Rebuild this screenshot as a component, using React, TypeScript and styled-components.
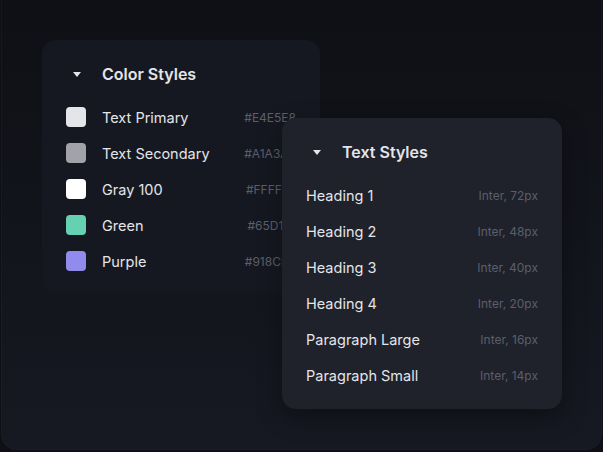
import React from 'react';
import styled, { createGlobalStyle } from 'styled-components';

const GlobalStyle = createGlobalStyle`
  html, body {
    margin: 0;
    padding: 0;
    background: #0f1015;
    font-family: Inter, "Noto Sans", sans-serif;
    -webkit-font-smoothing: antialiased;
  }
`;

const Frame = styled.div`
  box-sizing: border-box;
  width: 601px;
  height: 450px;
  margin: 0 1px;
  border-radius: 0 0 16px 16px;
  background: linear-gradient(to bottom, #0f1015 0%, #12141b 45%, #161922 100%);
  box-shadow: inset 1px 0 0 rgba(40, 44, 58, 0.25), inset -1px 0 0 rgba(40, 44, 58, 0.25),
    inset 0 -1px 0 rgba(40, 44, 58, 0.25);
  overflow: hidden;
  display: grid;
  grid-template-columns: 41px 240px 38px 242px;
  grid-template-rows: 40px 78px auto auto;
`;

const Card = styled.section<{ $tone: 'back' | 'front'; $area: string }>`
  grid-area: ${p => p.$area};
  align-self: start;
  box-sizing: border-box;
  padding: 16px 24px ${p => (p.$tone === 'front' ? '16px' : '14px')};
  border-radius: 14px;
  background: ${p => (p.$tone === 'front' ? '#1f212b' : '#161821')};
  box-shadow: ${p => (p.$tone === 'front' ? '0 8px 24px rgba(0, 0, 0, 0.35)' : 'none')};
  position: relative;
  z-index: ${p => (p.$tone === 'front' ? 2 : 1)};
`;

const Header = styled.div`
  height: 36px;
  display: flex;
  align-items: center;
  margin-bottom: 7px;
`;

const Caret = styled.span`
  width: 0;
  height: 0;
  margin-left: 7px;
  margin-right: 21px;
  border-left: 4px solid transparent;
  border-right: 4px solid transparent;
  border-top: 5px solid #e4e5e8;
`;

const Title = styled.h2`
  margin: 0;
  font-size: 16px;
  font-weight: 600;
  color: #e4e5e8;
  letter-spacing: 0;
`;

const Row = styled.div`
  height: 36px;
  display: flex;
  align-items: center;
  justify-content: space-between;
`;

const Left = styled.div`
  display: flex;
  align-items: center;
  gap: 16px;
`;

const Swatch = styled.span<{ $color: string }>`
  width: 20px;
  height: 20px;
  border-radius: 4px;
  background: ${p => p.$color};
`;

const Label = styled.span`
  font-size: 14.5px;
  font-weight: 400;
  color: #e4e5e8;
`;

const Meta = styled.span`
  font-size: 12px;
  font-weight: 400;
  color: #5c5f6b;
`;

const colors = [
  { name: 'Text Primary', hex: '#E4E5E8', color: '#e4e5e8' },
  { name: 'Text Secondary', hex: '#A1A3A8', color: '#a1a3a8' },
  { name: 'Gray 100', hex: '#FFFFFF', color: '#ffffff' },
  { name: 'Green', hex: '#65D1B1', color: '#65d1b1' },
  { name: 'Purple', hex: '#918CEB', color: '#918ceb' },
];

const textStyles = [
  { name: 'Heading 1', meta: 'Inter, 72px' },
  { name: 'Heading 2', meta: 'Inter, 48px' },
  { name: 'Heading 3', meta: 'Inter, 40px' },
  { name: 'Heading 4', meta: 'Inter, 20px' },
  { name: 'Paragraph Large', meta: 'Inter, 16px' },
  { name: 'Paragraph Small', meta: 'Inter, 14px' },
];

const App = () => (
  <>
    <GlobalStyle />
    <Frame>
      <Card $tone="back" $area="2 / 2 / 4 / 4">
        <Header>
          <Caret />
          <Title>Color Styles</Title>
        </Header>
        {colors.map(c => (
          <Row key={c.name}>
            <Left>
              <Swatch $color={c.color} />
              <Label>{c.name}</Label>
            </Left>
            <Meta>{c.hex}</Meta>
          </Row>
        ))}
      </Card>
      <Card $tone="front" $area="3 / 3 / 5 / 5">
        <Header>
          <Caret />
          <Title>Text Styles</Title>
        </Header>
        {textStyles.map(t => (
          <Row key={t.name}>
            <Label>{t.name}</Label>
            <Meta>{t.meta}</Meta>
          </Row>
        ))}
      </Card>
    </Frame>
  </>
);

export default App;
